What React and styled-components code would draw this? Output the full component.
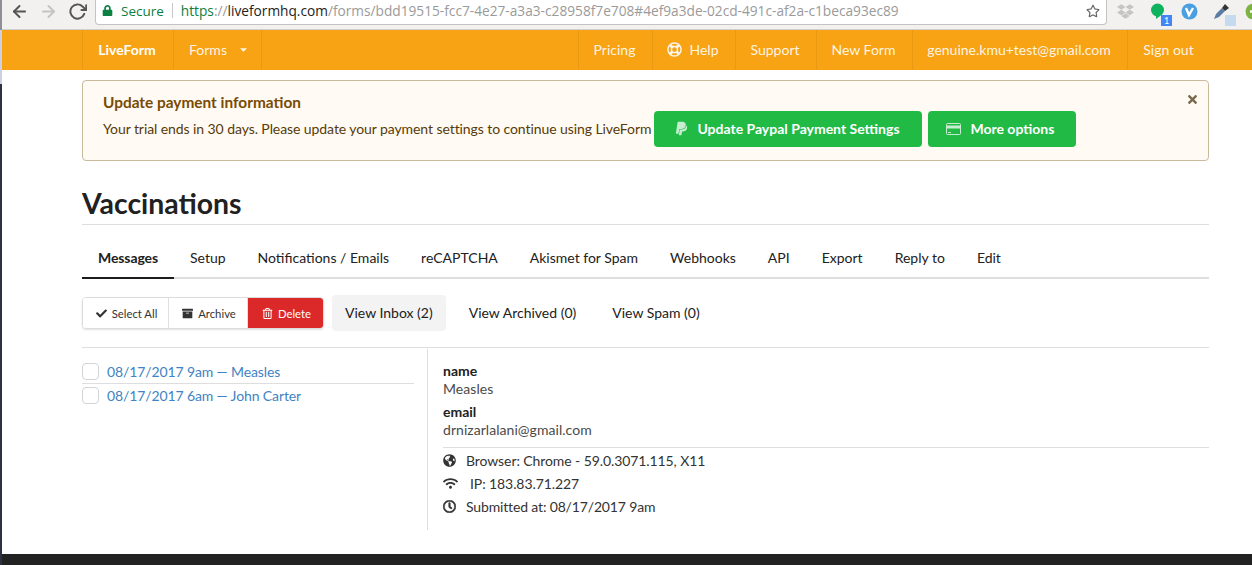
import React from 'react';
import styled, { createGlobalStyle } from 'styled-components';
import {
  FaArchive, FaCheck, FaDropbox, FaRegLifeRing, FaLock, FaPaypal, FaRegClock,
  FaRegStar, FaTimes, FaRegTrashAlt, FaWifi, FaGlobeAmericas, FaCaretDown,
} from 'react-icons/fa';
import { FiArrowLeft, FiArrowRight, FiRotateCw } from 'react-icons/fi';

const GlobalStyle = createGlobalStyle`
  html, body { margin: 0; padding: 0; background: #fff; }
  body { font-family: Lato, "Liberation Sans", sans-serif; font-size: 14px; color: #212121; overflow: hidden; }
  * { box-sizing: border-box; }
`;

const Page = styled.div`
  position: relative;
  height: 565px;
  display: flex;
  flex-direction: column;
`;

const LeftStrip = styled.div`
  position: absolute;
  left: 0;
  top: 0;
  bottom: 0;
  width: 2px;
  background: linear-gradient(#8f8f96 0, #8f8f96 30px, #cdd0e2 30px, #cdd0e2 84px, #2e3140 84px);
`;

const ChromeBar = styled.div`
  height: 30px;
  background: #f2f1f0;
  border-bottom: 1px solid #cfcfcf;
  display: flex;
  align-items: flex-start;
  padding-left: 10px;
`;

const NavIcons = styled.div`
  flex: none;
  display: flex;
  align-items: center;
  gap: 10px;
  height: 22px;
  width: 85px;
  svg { font-size: 19px; flex: none; stroke-width: 2.5; }
`;

const UrlBox = styled.div`
  flex: none;
  width: 1012px;
  height: 25px;
  background: #fff;
  border: 1px solid #c4c4c4;
  border-top: none;
  border-radius: 0 0 4px 4px;
  display: flex;
  align-items: center;
  padding: 0 6px 3px 6px;
  white-space: nowrap;
  overflow: hidden;
`;

const Secure = styled.span`
  color: #0b8043;
  display: flex;
  align-items: center;
  gap: 8px;
  font-family: "Open Sans", sans-serif;
  font-size: 13.5px;
  padding-right: 8px;
  margin-right: 8px;
  border-right: 1px solid #c8c8c8;
  height: 15px;
  svg { font-size: 11px; }
`;

const UrlText = styled.span`
  flex: 1;
  color: #9a9a9a;
  font-family: "Open Sans", sans-serif;
  font-size: 13.7px;
  overflow: hidden;
`;

const UrlScheme = styled.span`
  color: #0b8043;
`;

const UrlHost = styled.span`
  color: #222;
`;

const Extensions = styled.div`
  flex: 1;
  display: flex;
  align-items: center;
  gap: 15px;
  height: 22px;
  padding-left: 10px;
`;

const ExtSlot = styled.span`
  position: relative;
  flex: none;
  width: 17px;
  height: 17px;
  display: flex;
  align-items: center;
  justify-content: center;
  color: ${p => p.$color || '#555'};
  font-size: 17px;
`;

const ExtBadge = styled.span`
  position: absolute;
  right: -6px;
  bottom: -6px;
  width: 11px;
  height: 11px;
  background: ${p => p.$bg};
  color: #fff;
  font-size: 9px;
  line-height: 11px;
  text-align: center;
`;

const OrangeBar = styled.nav`
  height: 40px;
  margin-left: 2px;
  background: #f8a314;
  padding-left: 80px;
  padding-right: 43px;
  display: flex;
  justify-content: space-between;
`;

const NavGroup = styled.div`
  display: flex;
  border-left: 1px solid rgba(0, 0, 0, 0.06);
`;

const NavItem = styled.div`
  display: flex;
  align-items: center;
  gap: 7px;
  width: ${p => p.$w}px;
  justify-content: center;
  padding-bottom: 2px;
  padding-right: ${p => (p.$flat ? 0 : 2)}px;
  color: ${p => (p.$brand ? '#fff' : 'rgba(255, 255, 255, 0.9)')};
  font-weight: ${p => (p.$brand ? 700 : 400)};
  border-right: ${p => (p.$flat ? 'none' : '1px solid rgba(0, 0, 0, 0.06)')};
  white-space: nowrap;
`;

const FormsLabel = styled.span`
  padding-left: 5px;
`;

const Content = styled.main`
  flex: 1;
  padding: 10px 43px 0 82px;
`;

const Alert = styled.div`
  position: relative;
  height: 81px;
  background: #fffaf3;
  border: 1px solid #c9ba9b;
  border-radius: 4px;
  padding: 12px 20px 0;
  color: #573a08;
`;

const AlertTitle = styled.div`
  font-size: 15.4px;
  font-weight: 700;
  color: #794b02;
  line-height: 18px;
`;

const AlertRow = styled.div`
  display: flex;
  align-items: center;
  height: 36px;
  white-space: nowrap;
`;

const AlertText = styled.span`
  letter-spacing: -0.08px;
  margin-bottom: 2px;
`;

const AlertClose = styled.span`
  position: absolute;
  top: 12px;
  right: 9px;
  color: #7a6a4d;
  font-size: 13px;
`;

const GreenButton = styled.div`
  flex: none;
  height: 36px;
  width: ${p => p.$w}px;
  margin-left: ${p => p.$ml}px;
  padding-bottom: 1px;
  background: #21ba45;
  border-radius: 4px;
  color: #fff;
  font-weight: 700;
  display: flex;
  align-items: center;
  padding-left: ${p => p.$pl}px;
  gap: ${p => p.$gap}px;
  svg { opacity: 0.75; flex: none; }
`;

const Title = styled.h1`
  margin: 24px 0 0;
  height: 40px;
  font-size: 28.4px;
  line-height: 36px;
  font-weight: 700;
  color: #212121;
  border-bottom: 1px solid #dedede;
`;

const Tabs = styled.div`
  display: flex;
  margin-top: 14px;
  height: 40px;
  border-bottom: 2px solid #dedede;
`;

const Tab = styled.div`
  height: 40px;
  padding: 0 16px ${p => (p.$active ? 2 : 4)}px;
  display: flex;
  align-items: center;
  font-weight: ${p => (p.$active ? 700 : 400)};
  letter-spacing: ${p => (p.$active ? '-0.1px' : 0)};
  color: #212121;
  border-bottom: ${p => (p.$active ? '2px solid #1b1c1d' : 'none')};
  white-space: nowrap;
`;

const Toolbar = styled.div`
  display: flex;
  align-items: center;
  margin-top: 15px;
  height: 38px;
`;

const ActionGroup = styled.div`
  display: flex;
  height: 32px;
  width: 242px;
  border: 1px solid #dcdcdc;
  border-radius: 4px;
  box-shadow: 0 1px 2px rgba(0, 0, 0, 0.12);
  overflow: hidden;
  margin-right: 8px;
`;

const ActionButton = styled.div`
  width: ${p => p.$w}px;
  background: ${p => (p.$danger ? '#db2828' : '#fff')};
  color: ${p => (p.$danger ? '#fff' : '#333')};
  border-right: ${p => (p.$danger ? 'none' : '1px solid #e0e0e0')};
  font-size: 11.3px;
  display: flex;
  align-items: center;
  justify-content: center;
  gap: 5px;
  padding-left: 2px;
  svg { font-size: 11px; }
`;

const FilterLink = styled.div`
  height: 36px;
  display: flex;
  align-items: center;
  padding: 0 13px 1px;
  margin-right: ${p => p.$mr || 0}px;
  border-radius: 4px;
  background: ${p => (p.$active ? '#f3f3f3' : 'transparent')};
  color: #212121;
  white-space: nowrap;
`;

const Split = styled.div`
  display: flex;
  margin-top: 15px;
  border-top: 1px solid #dedede;
  height: 183px;
`;

const MessageList = styled.div`
  width: 332px;
  padding-top: 12px;
  margin-right: 13px;
`;

const MessageRow = styled.div`
  display: flex;
  align-items: center;
  gap: 8px;
  height: ${p => (p.$divider ? 24 : 23)}px;
  border-bottom: ${p => (p.$divider ? '1px solid #dedede' : 'none')};
`;

const Checkbox = styled.span`
  width: 17px;
  height: 17px;
  border: 1px solid #d4d4d5;
  border-radius: 4px;
  background: #fff;
`;

const MessageLink = styled.span`
  color: #4183c4;
  letter-spacing: -0.12px;
`;

const Detail = styled.div`
  flex: 1;
  border-left: 1px solid #dedede;
  margin-top: 1px;
  padding: 13px 0 0 15px;
`;

const FieldLabel = styled.div`
  font-weight: 700;
  line-height: 17px;
  color: #212121;
`;

const FieldValue = styled.div`
  line-height: 18px;
  margin: 1px 0 5px;
  color: #4a4a4a;
  letter-spacing: 0.05px;
`;

const MetaList = styled.div`
  border-top: 1px solid #dedede;
  margin-top: 8px;
  padding-top: 1px;
`;

const MetaRow = styled.div`
  height: 23px;
  display: flex;
  align-items: center;
  gap: ${p => p.$gap}px;
  color: #333;
  letter-spacing: ${p => p.$ls}px;
  svg { font-size: ${p => p.$icon}px; flex: none; }
`;

const BoldClock = styled(FaRegClock)`
  stroke: currentColor;
  stroke-width: 24px;
`;

const Footer = styled.footer`
  height: 11px;
  background: #222;
`;

// outline card with a solid band, like the old font-awesome glyph
const CardIcon = () => (
  <svg width="15" height="12" viewBox="0 0 15 12">
    <rect x="0.5" y="0.5" width="14" height="11" rx="1" fill="none" stroke="#fff" />
    <rect x="1" y="2.5" width="13" height="3" fill="#fff" />
    <rect x="2" y="9" width="3" height="1" fill="#fff" />
  </svg>
);

export default function App() {
  return (
    <Page>
      <GlobalStyle />
      <ChromeBar>
        <NavIcons>
          <FiArrowLeft color="#555" />
          <FiArrowRight color="#c4c4c4" />
          <FiRotateCw color="#555" />
        </NavIcons>
        <UrlBox>
          <Secure><FaLock />Secure</Secure>
          <UrlText>
            <UrlScheme>https</UrlScheme>://<UrlHost>liveformhq.com</UrlHost>/forms/bdd19515-fcc7-4e27-a3a3-c28958f7e708#4ef9a3de-02cd-491c-af2a-c1beca93ec89
          </UrlText>
          <FaRegStar color="#666" size={14} />
        </UrlBox>
        <Extensions>
          <ExtSlot $color="#c4c4c4"><FaDropbox /></ExtSlot>
          <ExtSlot>
            <svg width="15" height="16" viewBox="0 0 15 16"><circle cx="7.5" cy="7" r="6.5" fill="#0fb25f" /><path d="M6 12l0 4 4-3z" fill="#0fb25f" /></svg>
            <ExtBadge $bg="#4285f4">1</ExtBadge>
          </ExtSlot>
          <ExtSlot>
            <svg width="17" height="17" viewBox="0 0 17 17"><circle cx="8.5" cy="8.5" r="8" fill="#4a9fe0" /><path d="M5 5l3 7 4-7" fill="none" stroke="#fff" strokeWidth="2.4" /></svg>
          </ExtSlot>
          <ExtSlot>
            <svg width="17" height="17" viewBox="0 0 17 17"><path d="M1 16l2-5 6-6 3 3-6 6z" fill="#5b7da3" /><path d="M9 5l3-4 4 4-4 3z" fill="#333" /></svg>
            <ExtBadge $bg="#c5d9ef" />
          </ExtSlot>
          <ExtSlot>
            <svg width="17" height="17" viewBox="0 0 17 17"><circle cx="8.5" cy="8.5" r="8" fill="#7cb342" /><path d="M5 8.5h7" stroke="#fff" strokeWidth="2.4" /></svg>
          </ExtSlot>
        </Extensions>
      </ChromeBar>

      <OrangeBar>
        <NavGroup>
          <NavItem $w={91} $brand>LiveForm</NavItem>
          <NavItem $w={88}><FormsLabel>Forms</FormsLabel> <FaCaretDown size={11} style={{ marginLeft: 4 }} /></NavItem>
        </NavGroup>
        <NavGroup>
          <NavItem $w={74}>Pricing</NavItem>
          <NavItem $w={83}><FaRegLifeRing size={15} />Help</NavItem>
          <NavItem $w={81}>Support</NavItem>
          <NavItem $w={96}>New Form</NavItem>
          <NavItem $w={215}>genuine.kmu+test@gmail.com</NavItem>
          <NavItem $w={81} $flat>Sign out</NavItem>
        </NavGroup>
      </OrangeBar>

      <Content>
        <Alert>
          <AlertTitle>Update payment information</AlertTitle>
          <AlertRow>
            <AlertText>Your trial ends in 30 days. Please update your payment settings to continue using LiveForm</AlertText>
            <GreenButton $w={268} $ml={3} $pl={20} $gap={8}><FaPaypal size={15} />Update Paypal Payment Settings</GreenButton>
            <GreenButton $w={148} $ml={6} $pl={18} $gap={9}><CardIcon />More options</GreenButton>
          </AlertRow>
          <AlertClose><FaTimes /></AlertClose>
        </Alert>

        <Title>Vaccinations</Title>

        <Tabs>
          <Tab $active>Messages</Tab>
          <Tab>Setup</Tab>
          <Tab>Notifications / Emails</Tab>
          <Tab>reCAPTCHA</Tab>
          <Tab>Akismet for Spam</Tab>
          <Tab>Webhooks</Tab>
          <Tab>API</Tab>
          <Tab>Export</Tab>
          <Tab>Reply to</Tab>
          <Tab>Edit</Tab>
        </Tabs>

        <Toolbar>
          <ActionGroup>
            <ActionButton $w={86}><FaCheck />Select All</ActionButton>
            <ActionButton $w={79}><FaArchive />Archive</ActionButton>
            <ActionButton $w={75} $danger><FaRegTrashAlt />Delete</ActionButton>
          </ActionGroup>
          <FilterLink $active $mr={10}>View Inbox (2)</FilterLink>
          <FilterLink $mr={10}>View Archived (0)</FilterLink>
          <FilterLink>View Spam (0)</FilterLink>
        </Toolbar>

        <Split>
          <MessageList>
            <MessageRow $divider><Checkbox /><MessageLink>08/17/2017 9am — Measles</MessageLink></MessageRow>
            <MessageRow><Checkbox /><MessageLink>08/17/2017 6am — John Carter</MessageLink></MessageRow>
          </MessageList>
          <Detail>
            <FieldLabel>name</FieldLabel>
            <FieldValue>Measles</FieldValue>
            <FieldLabel>email</FieldLabel>
            <FieldValue>drnizarlalani@gmail.com</FieldValue>
            <MetaList>
              <MetaRow $gap={10} $icon={13} $ls={-0.09}><FaGlobeAmericas />Browser: Chrome - 59.0.3071.115, X11</MetaRow>
              <MetaRow $gap={12} $icon={15} $ls={-0.09}><FaWifi />IP: 183.83.71.227</MetaRow>
              <MetaRow $gap={10} $icon={13} $ls={-0.15}><BoldClock />Submitted at: 08/17/2017 9am</MetaRow>
            </MetaList>
          </Detail>
        </Split>
      </Content>
      <Footer />
      <LeftStrip />
    </Page>
  );
}
